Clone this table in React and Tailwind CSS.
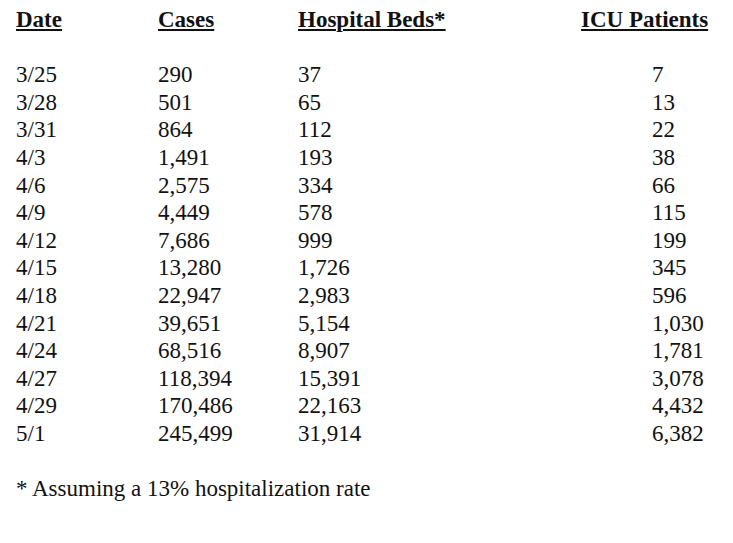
const rows = [
  ["3/25", "290", "37", "7"],
  ["3/28", "501", "65", "13"],
  ["3/31", "864", "112", "22"],
  ["4/3", "1,491", "193", "38"],
  ["4/6", "2,575", "334", "66"],
  ["4/9", "4,449", "578", "115"],
  ["4/12", "7,686", "999", "199"],
  ["4/15", "13,280", "1,726", "345"],
  ["4/18", "22,947", "2,983", "596"],
  ["4/21", "39,651", "5,154", "1,030"],
  ["4/24", "68,516", "8,907", "1,781"],
  ["4/27", "118,394", "15,391", "3,078"],
  ["4/29", "170,486", "22,163", "4,432"],
  ["5/1", "245,499", "31,914", "6,382"],
];

export default function App() {
  return (
    <div className="w-[733px] h-[543px] bg-white text-[#111] pl-4 pt-[6px] text-[23px] leading-[27.6px] font-['Liberation_Serif']">
      <div className="grid grid-cols-[142px_140px_283px_1fr]">
        {["Date", "Cases", "Hospital Beds*", "ICU Patients"].map((h) => (
          <div key={h}>
            <span className="font-bold underline decoration-2 underline-offset-2">{h}</span>
          </div>
        ))}
      </div>
      <div className="h-[27.6px]" />
      {rows.map((r) => (
        <div key={r[0]} className="grid grid-cols-[142px_140px_283px_1fr]">
          <div>{r[0]}</div>
          <div>{r[1]}</div>
          <div>{r[2]}</div>
          <div className="pl-[71px]">{r[3]}</div>
        </div>
      ))}
      <div className="h-[27.6px]" />
      <div>* Assuming a 13% hospitalization rate</div>
    </div>
  );
}
